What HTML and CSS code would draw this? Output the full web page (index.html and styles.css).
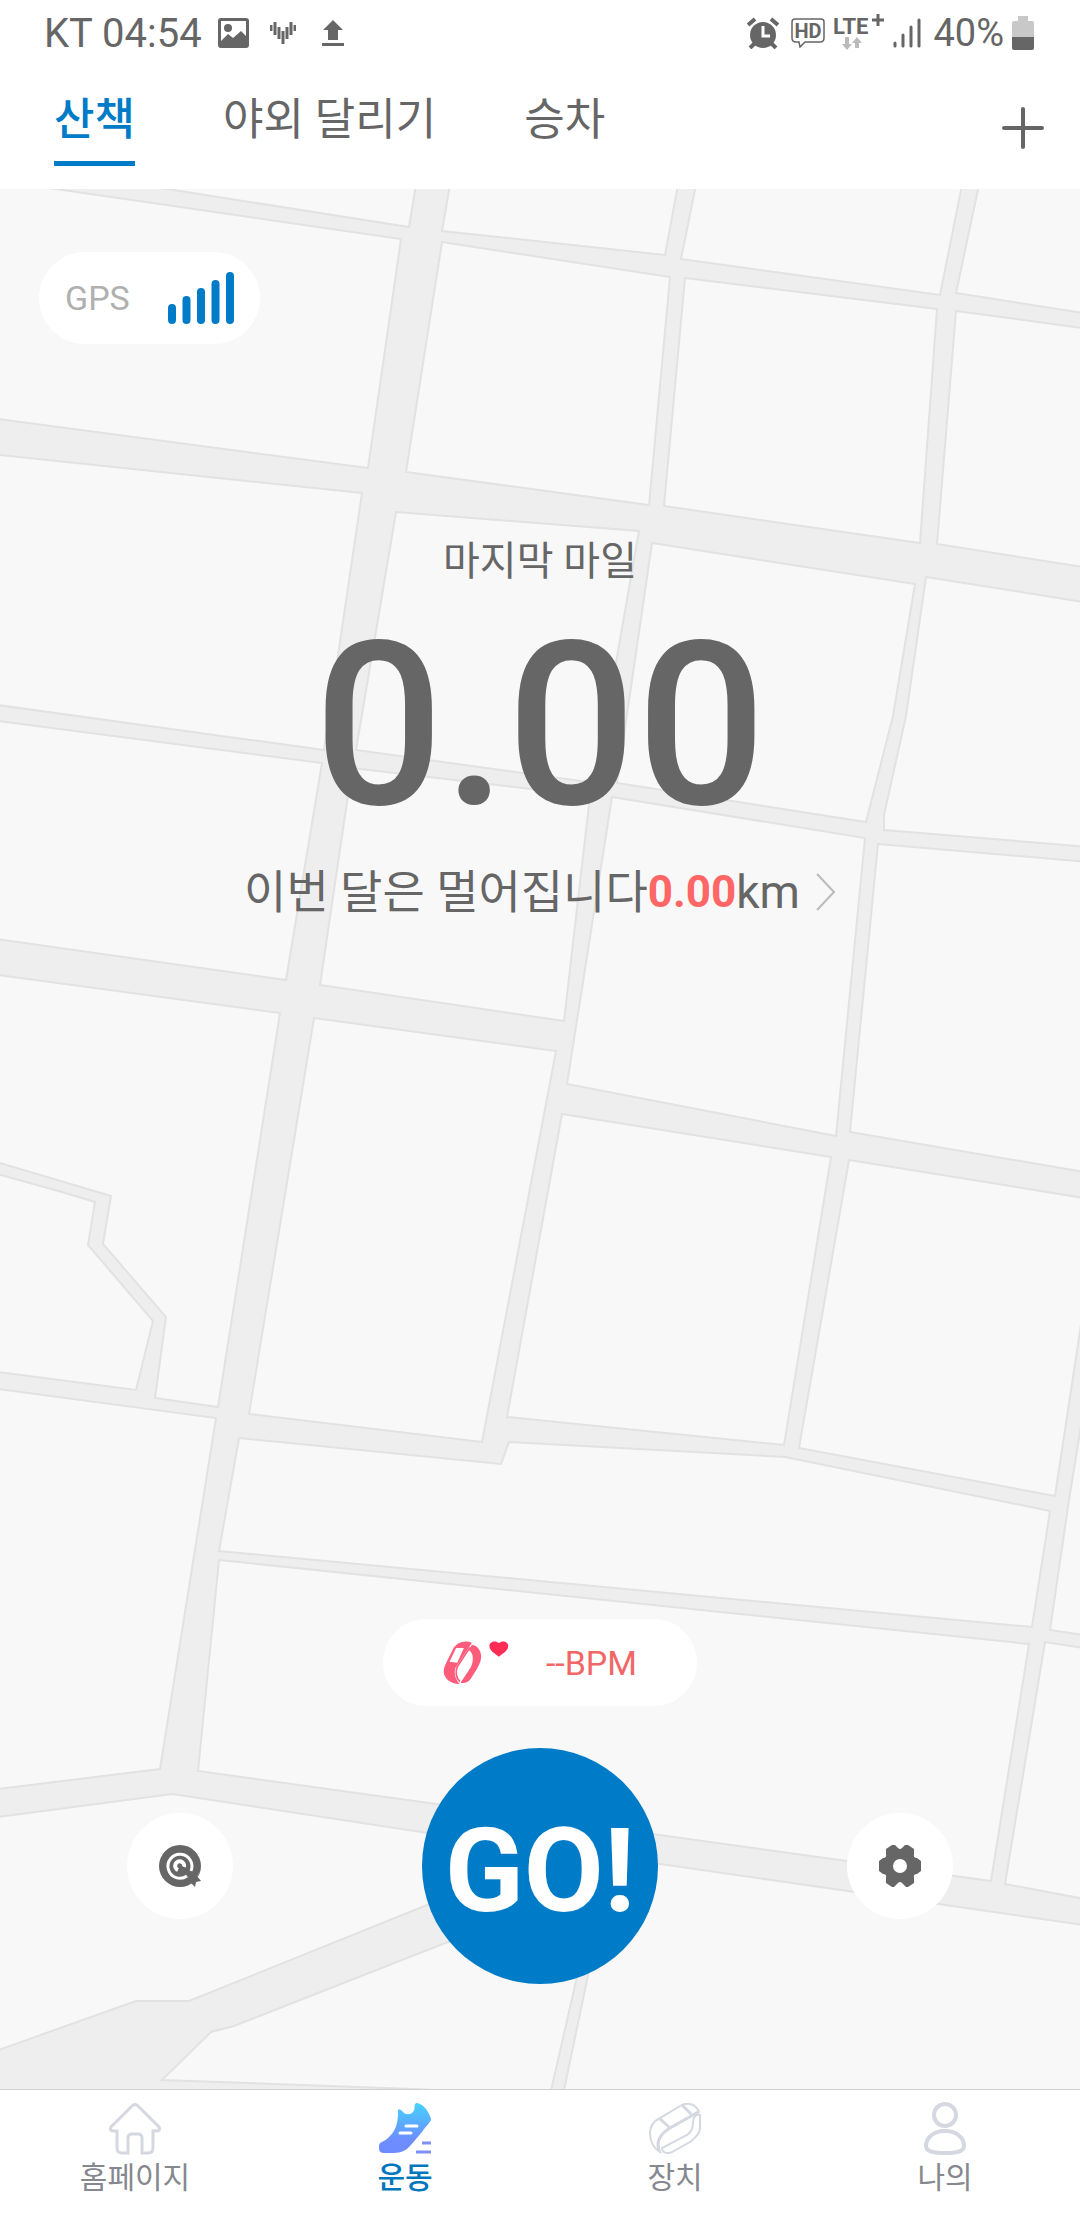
FILE: index.html
```
<!DOCTYPE html>
<html lang="ko">
  <head>
    <meta charset="UTF-8">
    <meta name="viewport" content="width=device-width, initial-scale=1.0">
    <title>운동</title>
    <link rel="stylesheet" href="styles.css">
  </head>

  <body>
    <div class="status-bar">
      <span class="status-time">KT 04:54</span>
      <svg class="status-picture" width="32" height="30" viewBox="0 0 32 30">
        <path fill="#666" fill-rule="evenodd" d="M3 0H28Q31 0 31 3V27Q31 30 28 30H3Q0 30 0 27V3Q0 0 3 0ZM3 3V23L10 16L15 20L23 13L28 18V3Z"/>
        <circle cx="10" cy="10" r="4" fill="#666"/>
      </svg>
      <svg class="status-wave" width="26" height="22" viewBox="0 0 26 22">
        <path stroke="#666" stroke-width="3" d="M1 3V9M5 0V13M9 5V17M13 9V22M17 5V17M21 0V13M25 3V9"/>
      </svg>
      <svg class="status-upload" width="22" height="26" viewBox="0 0 22 26">
        <path fill="#666" d="M11 0L21 10H16V20H6V10H1ZM0 23H22V26H0Z"/>
      </svg>
      <div class="status-right">
        <svg class="status-alarm" width="32" height="32" viewBox="0 0 32 32">
          <circle cx="16" cy="18" r="13" fill="#666"/>
          <path fill="none" stroke="#666" stroke-width="4" d="M1 8L8 2M31 8L24 2M8 26L3 31M24 26L29 31"/>
          <path fill="none" stroke="#fff" stroke-width="3" d="M16 9V19H23"/>
        </svg>
        <svg width="34" height="30" viewBox="0 0 34 30">
          <path fill="none" stroke="#666" stroke-width="1.5" d="M4 1H30Q33 1 33 4V20Q33 24 29 24H14L9 29L8 24H5Q1 24 1 20V4Q1 1 4 1Z"/>
          <text class="hd" x="17" y="20">HD</text>
        </svg>
        <svg width="52" height="38" viewBox="0 0 52 38">
          <text class="lte" x="0" y="20">LTE</text>
          <path stroke="#666" stroke-width="3" d="M45 0V12M39 6H51"/>
          <path fill="#bbb" d="M12 23H16V30H19L14 36L9 30H12ZM22 34V29H19L24 23L29 29H26V34Z"/>
        </svg>
        <svg width="28" height="30" viewBox="0 0 28 30">
          <path stroke="#666" stroke-width="3" stroke-linecap="round" d="M2 25V28M10 17V28M18 9V28M26 2V28"/>
        </svg>
        <span class="battery-text">40%</span>
        <svg width="22" height="34" viewBox="0 0 22 34">
          <path fill="#c8c8c8" d="M6 0H16V5H20Q22 5 22 7V22H0V7Q0 5 2 5H6Z"/>
          <path fill="#666" d="M0 21H22V32Q22 34 20 34H2Q0 34 0 32Z"/>
        </svg>
      </div>
    </div>

    <header class="header">
      <div class="tabs">
        <button class="tab tab-active">산책</button>
        <button class="tab">야외 달리기</button>
        <button class="tab">승차</button>
      </div>
      <button class="add" aria-label="추가">
        <svg width="42" height="42" viewBox="0 0 42 42">
          <path stroke="#666" stroke-width="4" stroke-linecap="round" d="M21 2V40M2 21H40"/>
        </svg>
      </button>
    </header>

    <main class="main">
      <!-- city blocks, the gaps between them are the roads -->
      <svg class="map" viewBox="0 189 1080 1900" preserveAspectRatio="xMidYMid slice" aria-hidden="true">
        <path d="M142 185L409 227L416 185Z"/>
        <path d="M-10 180L56 189L401 239L368 468L-10 418Z"/>
        <path d="M450 185L442 231L665 255L678 185Z"/>
        <path d="M696 185L681 259L940 295L962 185Z"/>
        <path d="M979 185L956 293L1090 314V185Z"/>
        <path d="M442 242L670 277L649 505L406 472Z"/>
        <path d="M685 278L937 309L920 543L664 506Z"/>
        <path d="M956 311L1090 329V568L937 544Z"/>
        <path d="M-10 454L362 493L324 750L-10 704Z"/>
        <path d="M396 512L639 531L595 783L356 750Z"/>
        <path d="M652 543L915 584L893 716L866 822L617 783Z"/>
        <path d="M926 577L1090 603V847L884 830V815L906 716Z"/>
        <path d="M-10 720L322 763L286 980L-10 938Z"/>
        <path d="M352 768L590 796L564 1021L320 985Z"/>
        <path d="M612 797L865 838L836 1136L567 1084Z"/>
        <path d="M878 844L1090 862V1173L850 1132Z"/>
        <path d="M-10 974L280 1013L218 1407L155 1398L166 1317L103 1244L111 1196L-10 1160Z"/>
        <path d="M-10 1172L62 1192L95 1202L88 1245L153 1321L136 1390L-10 1371Z"/>
        <path d="M314 1018L556 1051L482 1442L249 1414Z"/>
        <path d="M562 1114L831 1157L784 1445L507 1417Z"/>
        <path d="M849 1160L1090 1199V1265L1055 1496L799 1448Z"/>
        <path d="M-10 1388L216 1418L160 1769L-10 1790Z"/>
        <path d="M239 1438L501 1464L509 1442L785 1457L1050 1511L1032 1627L219 1551Z"/>
        <path d="M1090 1370L1069 1500L1050 1630L1090 1636Z"/>
        <path d="M219 1560L1029 1644L991 1881L847 1861L198 1771Z"/>
        <path d="M1045 1642L1090 1649V1900L1005 1884Z"/>
        <path d="M-10 1818L172 1794L500 1844V1877L427 1905L189 2001H136L-10 2053Z"/>
        <path d="M560 1898L234 2026L211 2032L162 2080L413 2089L550 2095L595 1898Z"/>
        <path d="M610 1870L563 2095H1090V1926L640 1861Z"/>
      </svg>

      <div class="gps">
        <span>GPS</span>
        <svg width="66" height="52" viewBox="0 0 66 52">
          <path stroke="#007bc7" stroke-width="8" stroke-linecap="round" d="M4 36V48M18.500 28V48M33 20V48M47.500 12V48M62 4V48"/>
        </svg>
      </div>

      <section class="summary">
        <div class="summary-label">마지막 마일</div>
        <div class="distance">0.00</div>
        <a class="month" href="#">
          <span>이번 달은 멀어집니다</span><b class="month-value">0.00</b><span>km</span>
          <svg class="chevron" width="20" height="38" viewBox="0 0 20 38">
            <path fill="none" stroke="#bbb" stroke-width="2" d="M1 1L18 19L1 37"/>
          </svg>
        </a>
      </section>

      <section class="bottom">
        <div class="bpm">
          <svg width="66" height="45" viewBox="0 0 196 134">
            <path fill="#ff5c7c" d="M32 22C44 6 64 0 86 8L36 84C32 102 38 120 50 131C20 130 3 114 2 96C2 82 6 76 10 66Z"/>
            <path fill="#fff" d="M39 24H62L42 68L19 65Z"/>
            <path fill="#ff5c7c" d="M86 14C100 16 111 28 113 44C115 60 108 72 102 84L82 116C74 126 64 130 52 127L82 82C90 68 94 40 76 30Z"/>
            <path fill="none" stroke="#ff5c7c" stroke-width="5" d="M80 22L42 80C36 94 38 112 50 124"/>
            <path fill="#ff2d55" d="M166 50C154 40 138 32 138 18C138 4 156 0 166 9C176 0 194 4 194 18C194 32 178 40 166 50Z"/>
          </svg>
          <span>--BPM</span>
        </div>
        <div class="controls">
          <button class="round" aria-label="목표">
            <svg width="42" height="42" viewBox="0 0 42 42">
              <circle cx="21" cy="21" r="21" fill="#666"/>
              <path fill="#fff" d="M42 25L38 32L42 36V42H32L34 38Z"/>
              <path fill="#666" d="M32 34L38 31L42 36L37 37L36 42L32 38Z"/>
              <path fill="none" stroke="#fff" stroke-width="3" d="M28 31A12 12 0 1 1 32 26"/>
              <path fill="none" stroke="#fff" stroke-width="4" d="M19 25A4.500 4.500 0 1 1 25 22"/>
              <path stroke="#666" stroke-width="3" d="M21 21L33 32"/>
            </svg>
          </button>
          <button class="go">GO!</button>
          <button class="round" aria-label="설정">
            <svg width="42" height="42" viewBox="0 0 42 42">
              <path fill="#666" fill-rule="evenodd" d="M7 4L13 0H16L19 3Q21 5 23 3L26 0H29L35 4V9Q34 13 38 13L42 16V26L38 29Q34 29 35 33V38L29 42H27L23 38Q21 36 19 38L15 42H13L7 38V33Q8 29 4 29L0 26V16L4 13Q8 13 7 9ZM21 14A7 7 0 1 0 21 28A7 7 0 1 0 21 14Z"/>
            </svg>
          </button>
        </div>
      </section>
    </main>

    <nav class="nav">
      <a class="nav-item" href="#">
        <svg width="54" height="54" viewBox="0 0 54 54" fill="none" stroke="#d5d8e0" stroke-width="3">
          <path d="M24 4Q27 1 30 4L51 25Q53 29 48 29H45V46Q45 51 40 51H34V36Q34 32 30 32H24Q20 32 20 36V51H14Q9 51 9 46V29H6Q1 29 3 25Z"/>
        </svg>
        <span>홈페이지</span>
      </a>
      <a class="nav-item nav-active" href="#">
        <svg width="54" height="54" viewBox="0 0 54 54">
          <defs>
            <linearGradient id="shoe" x1="0" y1="0" x2="0" y2="1">
              <stop offset="0" stop-color="#45d2ff"/>
              <stop offset="0.750" stop-color="#6d8cff"/>
            </linearGradient>
          </defs>
          <path fill="url(#shoe)" d="M1 44C1 40 5 40 9 37C17 30 20 23 20 10C20 6 22 7 25 10C28 13 32 13 35 10C38 7 35 1 39 1C46 2 51 10 53 17C53 20 48 24 44 30L32 44C26 51 20 51 6 51C1 51 1 48 1 44Z"/>
          <path stroke="#fff" stroke-width="3" stroke-linecap="round" d="M28 24H39M22 31H33"/>
          <path stroke="#7f8ff5" stroke-width="3" d="M44 41H53M38 50H53"/>
        </svg>
        <span>운동</span>
      </a>
      <a class="nav-item" href="#">
        <svg width="54" height="54" viewBox="0 0 54 54" fill="none" stroke="#d5d8e0" stroke-width="2">
          <path d="M12 50C5 46 2 38 2 31C2 24 6 19 12 16L32 4C41 -1 48 3 51 10L22 26C12 32 8 40 12 50Z"/>
          <path stroke-width="3" d="M12 17L21 25M34 3L43 12M50 10L22 26C12 32 8 40 11 49"/>
          <path d="M52 13C48 12 45 15 45 20C45 26 44 30 39 33L14 46C14 52 22 52 26 49L42 40C50 34 52 30 52 26Z"/>
        </svg>
        <span>장치</span>
      </a>
      <a class="nav-item" href="#">
        <svg width="54" height="54" viewBox="0 0 54 54" fill="none" stroke="#d5d8e0" stroke-width="4">
          <circle cx="27" cy="13" r="11"/>
          <path d="M27 29C39 29 46 36 46 44C46 50 37 51 27 51C17 51 8 50 8 44C8 36 15 29 27 29Z"/>
        </svg>
        <span>나의</span>
      </a>
    </nav>
  </body>
</html>
```
FILE: styles.css
```
* {
  box-sizing: border-box;
}

body {
  margin: 0;
  min-height: 100vh;
  display: flex;
  flex-direction: column;
  background: #fff;
  color: #666;
  font-family: Roboto, "Noto Sans CJK KR", sans-serif;
}

button {
  border: 0;
  padding: 0;
  background: none;
  color: inherit;
  font: inherit;
}

a {
  color: inherit;
  text-decoration: none;
}

svg {
  display: block;
}

.status-bar {
  display: flex;
  align-items: center;
  height: 66px;
  padding: 0 46px 0 44px;
  font-size: 38px;
}

.status-time {
  font-size: 40px;
}

.status-picture {
  margin-left: 16px;
}

.status-wave {
  margin-left: 20px;
}

.status-upload {
  margin-left: 26px;
}

.status-right {
  display: flex;
  align-items: center;
  gap: 8px;
  margin-left: auto;
}

.status-alarm {
  margin-right: 4px;
}

.battery-text {
  margin-left: 4px;
}

.hd {
  fill: #666;
  font-size: 20px;
  font-weight: 700;
  text-anchor: middle;
}

.lte {
  fill: #666;
  font-size: 22px;
  font-weight: 700;
}

.header {
  display: flex;
  align-items: center;
  justify-content: space-between;
  padding: 24px 36px 23px 54px;
}

.tabs {
  display: flex;
  gap: 88px;
}

.tab {
  padding-bottom: 11px;
  border-bottom: 5px solid transparent;
  font-size: 44px;
  line-height: 60px;
}

.tab-active {
  border-color: #007bc7;
  color: #007bc7;
  font-weight: 500;
}

.main {
  position: relative;
  flex: 1;
  display: flex;
  flex-direction: column;
  background: #eee;
}

.map {
  position: absolute;
  inset: 0;
  width: 100%;
  height: 100%;
  fill: #f8f8f8;
  stroke: #e2e2e2;
  stroke-width: 2;
}

.gps, .summary, .bottom {
  position: relative;
}

.gps {
  display: flex;
  align-items: center;
  align-self: flex-start;
  gap: 38px;
  height: 92px;
  margin: 63px 0 0 39px;
  padding: 0 26px;
  border-radius: 46px;
  background: #fff;
  color: #b0b0b0;
  font-size: 34px;
}

.summary {
  display: flex;
  flex-direction: column;
  align-items: center;
  margin-top: 188px;
}

.summary-label {
  font-size: 40px;
  line-height: 60px;
}

.distance {
  margin-top: 20px;
  font-size: 228px;
  font-weight: 500;
  line-height: 228px;
}

.month {
  display: flex;
  align-items: center;
  margin-top: 22px;
  font-size: 46px;
  line-height: 60px;
}

.month-value {
  color: #ff6666;
  font-size: 44px;
}

.chevron {
  margin-left: 16px;
}

.bottom {
  margin-top: auto;
  padding-bottom: 105px;
}

.bpm {
  display: flex;
  align-items: center;
  justify-content: space-between;
  width: 314px;
  height: 87px;
  margin: 0 auto 42px;
  padding: 0 60px;
  border-radius: 44px;
  background: #fff;
  color: #f26666;
  font-size: 34px;
}

.controls {
  display: grid;
  grid-template-columns: repeat(3, 1fr);
  align-items: center;
  justify-items: center;
}

.round {
  display: flex;
  align-items: center;
  justify-content: center;
  width: 106px;
  height: 106px;
  border-radius: 50%;
  background: #fff;
}

.go {
  width: 236px;
  height: 236px;
  padding-top: 10px;
  border-radius: 50%;
  background: #007bc7;
  color: #fff;
  font-size: 116px;
  font-weight: 700;
}

.nav {
  display: grid;
  grid-template-columns: repeat(4, 1fr);
  height: 131px;
  border-top: 1px solid #d0d0d0;
}

.nav-item {
  display: flex;
  flex-direction: column;
  align-items: center;
  padding-top: 12px;
  color: #85888e;
  font-size: 30px;
  line-height: 44px;
}

.nav-active {
  color: #0077bd;
  font-weight: 500;
}
```
